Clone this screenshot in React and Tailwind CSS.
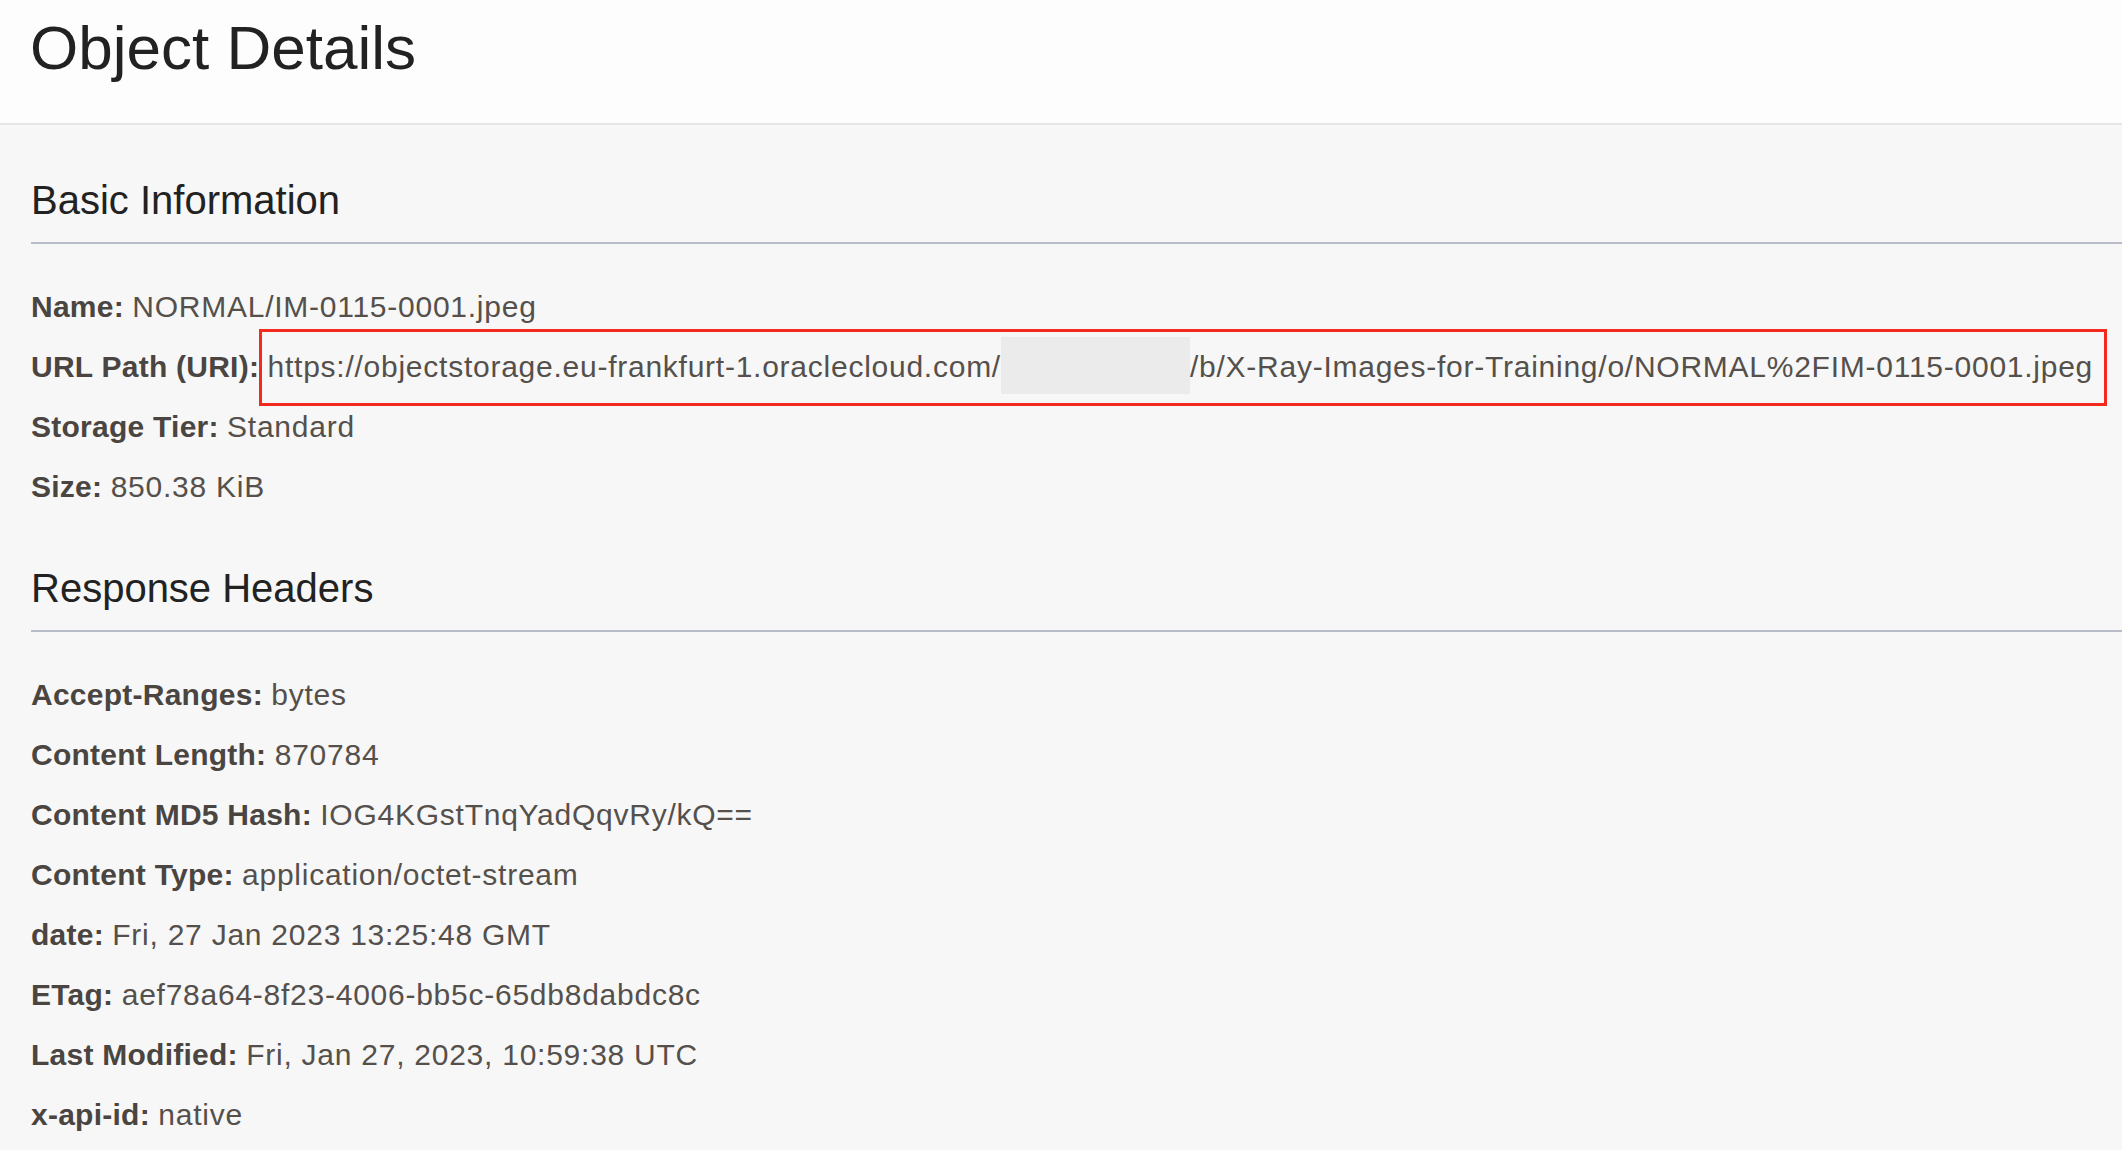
// Object details page — header, two sections of key/value rows

const basicInfo = [
    { label: 'Name:', value: 'NORMAL/IM-0115-0001.jpeg' },
    { label: 'URL Path (URI):', url: true },
    { label: 'Storage Tier:', value: 'Standard' },
    { label: 'Size:', value: '850.38 KiB' },
];

const responseHeaders = [
    { label: 'Accept-Ranges:', value: 'bytes' },
    { label: 'Content Length:', value: '870784' },
    { label: 'Content MD5 Hash:', value: 'IOG4KGstTnqYadQqvRy/kQ==' },
    { label: 'Content Type:', value: 'application/octet-stream' },
    { label: 'date:', value: 'Fri, 27 Jan 2023 13:25:48 GMT' },
    { label: 'ETag:', value: 'aef78a64-8f23-4006-bb5c-65db8dabdc8c' },
    { label: 'Last Modified:', value: 'Fri, Jan 27, 2023, 10:59:38 UTC' },
    { label: 'x-api-id:', value: 'native' },
];

function UrlValue() {
    return (
        <span className="relative inline-block leading-[60px] whitespace-nowrap text-[#55504b] tracking-[0.75px]">
            https://objectstorage.eu-frankfurt-1.oraclecloud.com/
            {/* redacted namespace */}
            <span className="inline-block h-[57px] w-[189px] bg-[#ebebeb] align-top" />
            /b/X-Ray-Images-for-Training/o/NORMAL%2FIM-0115-0001.jpeg
            {/* red highlight annotation */}
            <span className="absolute -top-[8px] -bottom-[9px] -left-[9px] -right-[14px] border-[3px] border-[#f52a1e] pointer-events-none" />
        </span>
    );
}

function Row({ label, value, url }) {
    return (
        <div className="leading-[60px] text-[30px] whitespace-nowrap">
            <span className="font-bold text-[#4a4541] tracking-[0.25px]">{label}</span>{' '}
            {url ? <UrlValue /> : <span className="text-[#55504b] tracking-[0.75px]">{value}</span>}
        </div>
    );
}

function Section({ title, rows, top }) {
    return (
        <section>
            <h2 className={`${top} pb-[18px] border-b-2 border-[#b7bcc6] text-[40px] leading-[48px] text-[#222222]`}>
                {title}
            </h2>
            <div className="mt-[33px]">
                {rows.map((r) => (
                    <Row key={r.label} {...r} />
                ))}
            </div>
        </section>
    );
}

export default function App() {
    return (
        <div className="min-h-[1150px] w-full overflow-hidden bg-[#f7f7f7] font-['Liberation_Sans',Arial,sans-serif]">
            {/* Page header */}
            <header className="h-[125px] bg-[#fdfdfd] border-b-2 border-[#e6e6e6] pl-[30px] pt-[11px]">
                <h1 className="text-[62px] leading-[74px] text-[#222222]">Object Details</h1>
            </header>

            <main className="pl-[31px]">
                <Section title="Basic Information" rows={basicInfo} top="mt-[51px]" />
                <Section title="Response Headers" rows={responseHeaders} top="mt-[47px]" />
            </main>
        </div>
    );
}
